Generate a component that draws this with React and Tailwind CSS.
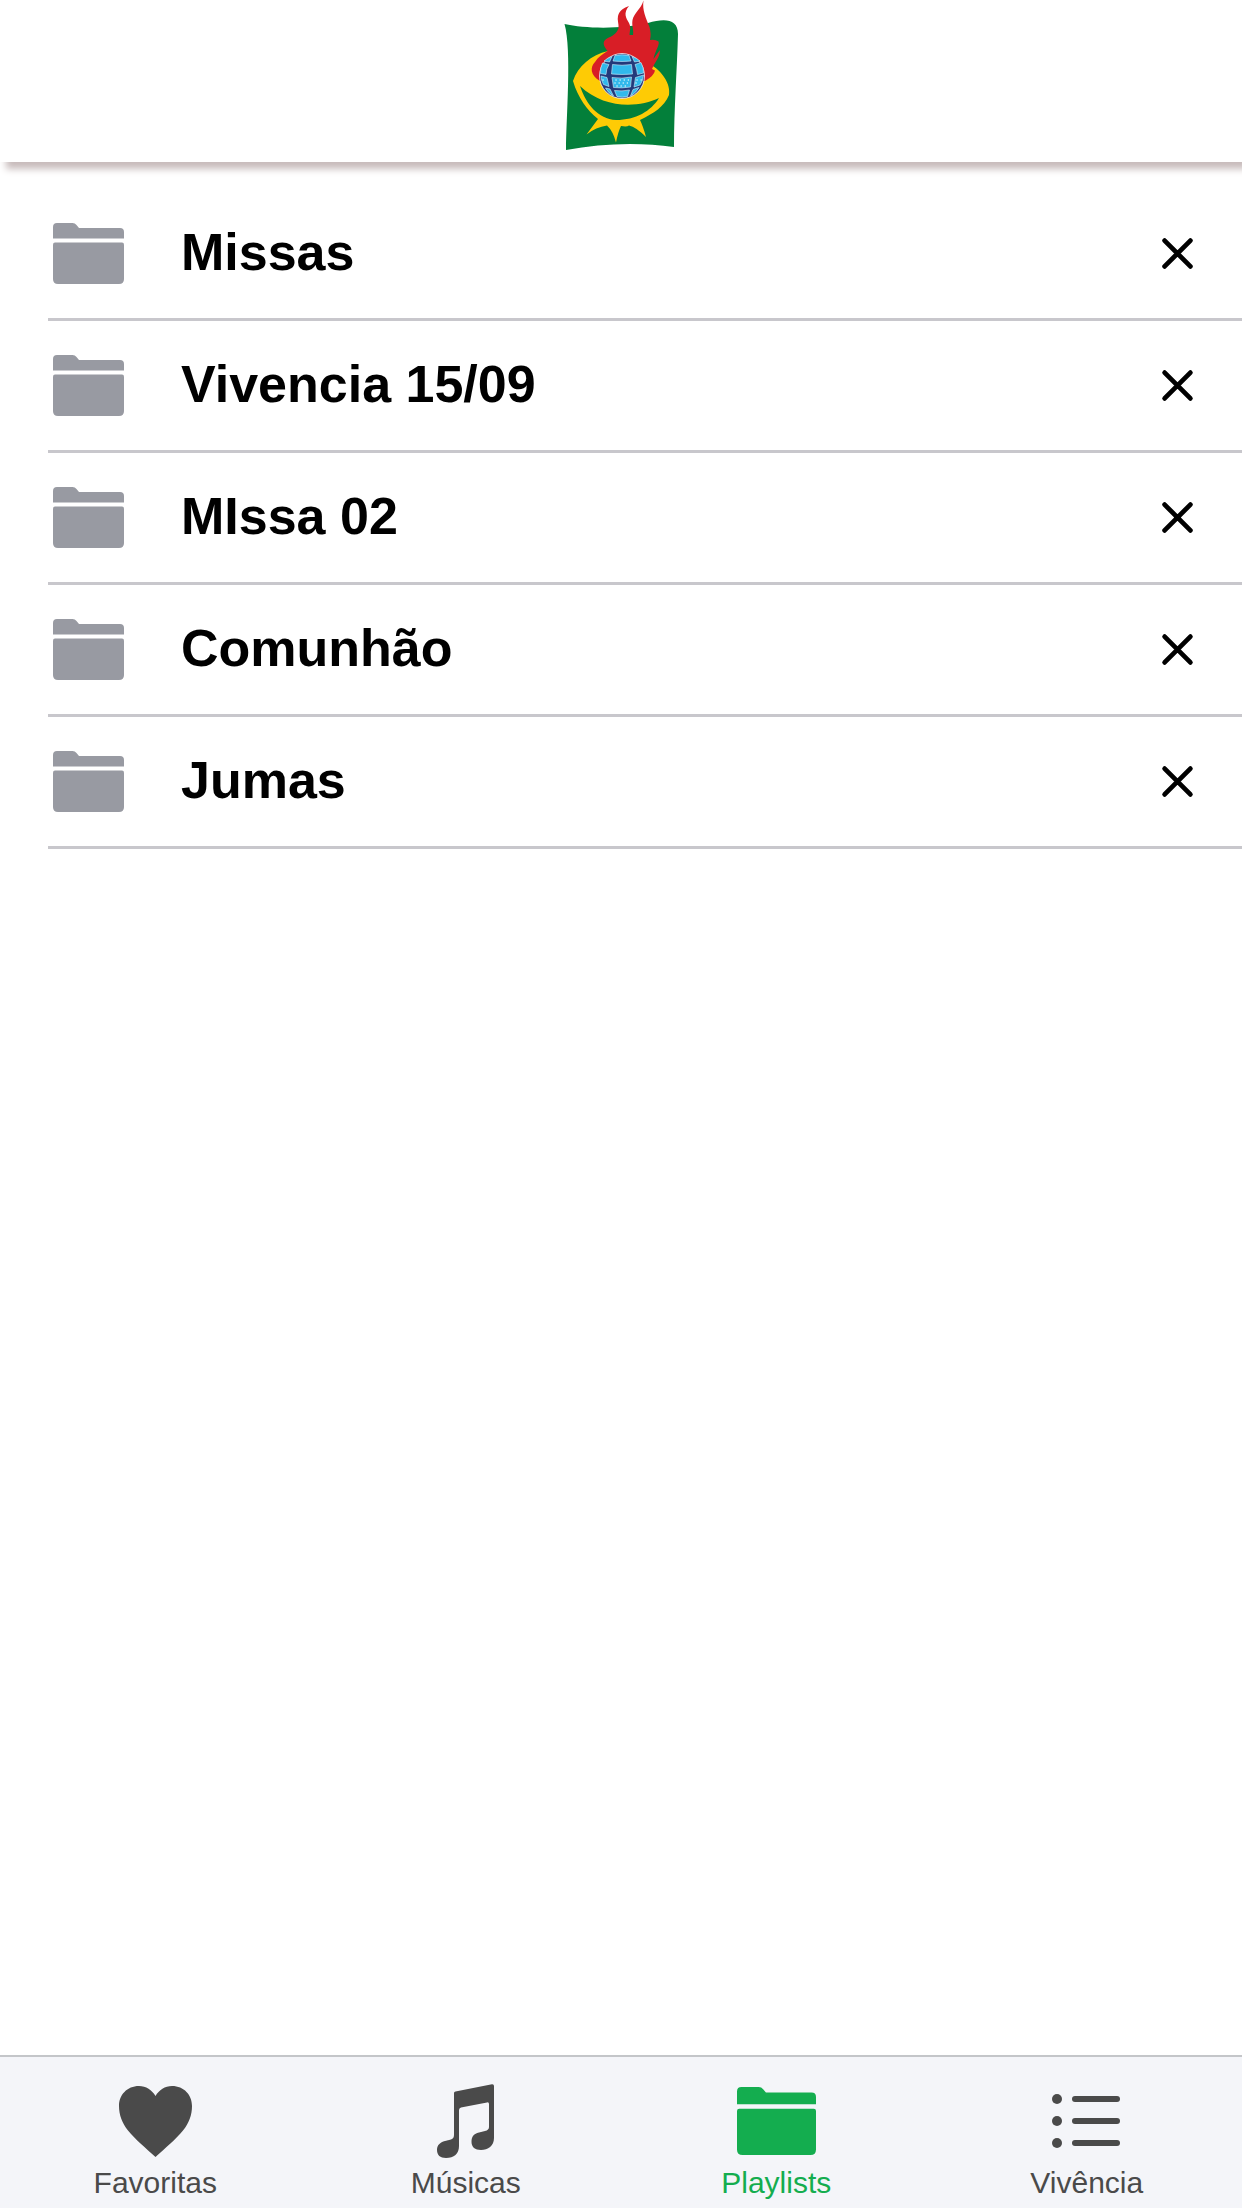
function FolderIcon({ className }) {
  return (
    <svg viewBox="0 0 71 61" preserveAspectRatio="none" fill="currentColor" className={className} aria-hidden="true">
      <path d="M0 15.500V4Q0 0 4 0H19.500Q22 0 23.500 2L26 5H67Q71 5 71 9V15.500H0Z" />
      <path d="M2 19.500H69Q71 19.500 71 21.500V56Q71 61 66 61H5Q0 61 0 56V21.500Q0 19.500 2 19.500Z" />
    </svg>
  );
}

function CloseIcon({ className }) {
  return (
    <svg viewBox="0 0 32 32" className={className} fill="none" stroke="currentColor" strokeWidth="4.600" strokeLinecap="round" aria-hidden="true">
      <path d="M3.500 3.500L28.500 28.500M28.500 3.500L3.500 28.500" />
    </svg>
  );
}

function HeartIcon({ className }) {
  return (
    <svg viewBox="0 0 73 71" className={className} fill="currentColor" aria-hidden="true">
      <path d="M36.500 10C40 4 46 0 53 0C65 0 73 9 73 20C73 29 70 37 64 44.500C57 53 46 62.500 36.500 71C27 62.500 16 53 9 44.500C3 37 0 29 0 20C0 9 8 0 20 0C27 0 33 4 36.500 10Z" />
    </svg>
  );
}

function NotesIcon({ className }) {
  return (
    <svg viewBox="0 0 57 74" className={className} fill="currentColor" aria-hidden="true">
      <path fillRule="evenodd" d="M18.500 7.500L55 0.200Q57 0 57 2V54C57 62 51 66 44 66C38 66 34.500 63 34.500 58C34.500 52 37 50 42 48.500L48 47Q52 46 52 43V20Q52 18 50 18.400L24 23.500Q22 24 22 26V62C22 70 17 74 9 74C3 74 0 71 0 66C0 61 3 58.500 8 57L14 55.500Q17 54.500 17 51V9Q17 7.800 18.500 7.500Z" />
    </svg>
  );
}

function ListIcon({ className }) {
  return (
    <svg viewBox="0 0 70 54" className={className} fill="currentColor" aria-hidden="true">
      <circle cx="5" cy="5" r="5" />
      <circle cx="5" cy="27" r="5" />
      <circle cx="5" cy="49" r="5" />
      <rect x="20" y="2" width="48" height="6" rx="3" />
      <rect x="20" y="24" width="48" height="6" rx="3" />
      <rect x="20" y="46" width="48" height="6" rx="3" />
    </svg>
  );
}

function Logo({ className }) {
  return (
    <svg viewBox="-1 0 116 150" className={className} role="img" aria-label="Logo">
      <path fill="#037f3a" d="M0.500 24C22 29 60 29 84 23C101 18 114 19 114 34C113 70 110 110 110 147C76 142 38 143 2 150C2 120 8 50 0.500 24Z" />
      <path fill="#fecb05" d="M44 51C27 55 14 66 9 81C14 98 23 110 34 119L22.500 134.500Q32 127 43 125.500Q49 131 52 142.500Q54 132 57 126Q63 127 65 125.500Q72 127 82 137Q79 126 76 120C90 113 100 107 105 95C107 84 98 71 86 64Z" />
      <path fill="#037f3a" d="M16 86C22 104 34 119 52 120C72 120 87 111 95 98C74 108 40 109 16 86Z" />
      <path
        fill="#d81e26"
        d="M79.500 0.500C78 10 82 18 85.500 27Q87.500 34 86 40Q91 39 94.500 41.500C96 45 91 51 89.500 59Q93 54 96 50C96 57 91 62 88 69L91 70.500Q90 76 81 81L36 81C26 75 26 67 31 62C34 57 39 54 43.500 51C38 44 39 41 43 38.500C48 36 53 34 54.500 28C55 24 53 20 54 16C55.500 10 60 8 65 6C59 13 62 18 65 23C67 27 66 30 65.500 35H69C70 30 67.500 26 68.500 20C70 13 77 9 79.500 0.500Z"
      />
      <circle cx="58" cy="76" r="22.500" fill="#23397a" stroke="#f8f4f5" strokeWidth="0.800" />
      <g fill="#31b9ec" stroke="#d4effa" strokeWidth="0.600">
        <path d="M51 55.500Q58 54 65 55.500L67 61Q58 62 49 61Z" />
        <path d="M48 56.500L45.500 62L40 61Q43 58 48 56.500Z" />
        <path d="M68 56.500L70.500 62L76 61Q73 58 68 56.500Z" />
        <path d="M38.500 63L45 64.500Q42 69 42 74.500L36.500 73.500Q36 68 38.500 63Z" />
        <path d="M48.500 64.500Q58 66 67.500 64.500L68.500 74Q58 75 47.500 74Z" />
        <path d="M71 64.500L77 62.500Q80 68 79.500 73L73.500 74.500Q73 69 71 64.500Z" />
        <path d="M37 76L43 77.500L45 86.500L39.500 84.500Q37 80 37 76Z" />
        <path d="M48 77.500Q58 79 67.500 77L66.500 87Q58 88.500 49.500 87.500Z" />
        <path d="M71.500 77.500L79.500 75Q79 81 76 85L70 87Z" />
        <path d="M41.500 88L46 89L49.500 96Q44 93 41.500 88Z" />
        <path d="M50.500 90.500Q58 91.500 65.500 90L63.500 96.500Q58 98 53 96.500Z" />
        <path d="M69 89.500L75 87.500Q72 93 66.500 96Z" />
      </g>
      <path stroke="#dcf3fb" strokeWidth="1.400" strokeLinecap="round" strokeDasharray="0.100 4" d="M52 80H66M51 83H66M53 86H65M39 80H43M73 80H78M72 83H76" />
    </svg>
  );
}

const playlists = ["Missas", "Vivencia 15/09", "MIssa 02", "Comunhão", "Jumas"];

const tabs = [
  { label: "Favoritas", icon: <HeartIcon className="h-[71px] w-[73px]" /> },
  { label: "Músicas", icon: <NotesIcon className="h-[74px] w-[57px]" /> },
  { label: "Playlists", icon: <FolderIcon className="h-[68px] w-[79px]" />, active: true },
  { label: "Vivência", icon: <ListIcon className="h-[54px] w-[70px]" /> },
];

export default function App() {
  return (
    <div className="flex min-h-screen flex-col bg-white font-['Liberation_Sans',Arial,sans-serif]">
      <header className="flex h-[162px] justify-center bg-white shadow-[6px_7px_7px_#c8bcbc]">
        <Logo className="h-[150px] w-[116px]" />
      </header>

      <main className="flex-1 pt-[27px]">
        <ul className="pl-12">
          {playlists.map((name) => (
            <li key={name} className="flex h-[132px] items-center border-b-[3px] border-[#c8c7cc] pr-12 pl-[5px]">
              <FolderIcon className="h-[61px] w-[71px] shrink-0 text-[#989aa2]" />
              <h2 className="ml-[57px] flex-1 pb-1 text-[52px] leading-[60px] font-bold text-black">{name}</h2>
              <button type="button" aria-label={`Remover ${name}`} className="text-black">
                <CloseIcon className="size-[33px]" />
              </button>
            </li>
          ))}
        </ul>
      </main>

      <nav className="grid h-[153px] grid-cols-4 border-t-2 border-[#c4c6c9] bg-[#f4f5f9]">
        {tabs.map(({ label, icon, active }) => (
          <a
            key={label}
            href="#"
            aria-current={active ? "page" : undefined}
            className={`flex flex-col items-center pt-6 ${active ? "text-[#14ad4f]" : "text-[#4a4a4a]"}`}
          >
            <span className="flex h-20 items-center">{icon}</span>
            <span className="text-[30px] leading-[44px]">{label}</span>
          </a>
        ))}
      </nav>
    </div>
  );
}
